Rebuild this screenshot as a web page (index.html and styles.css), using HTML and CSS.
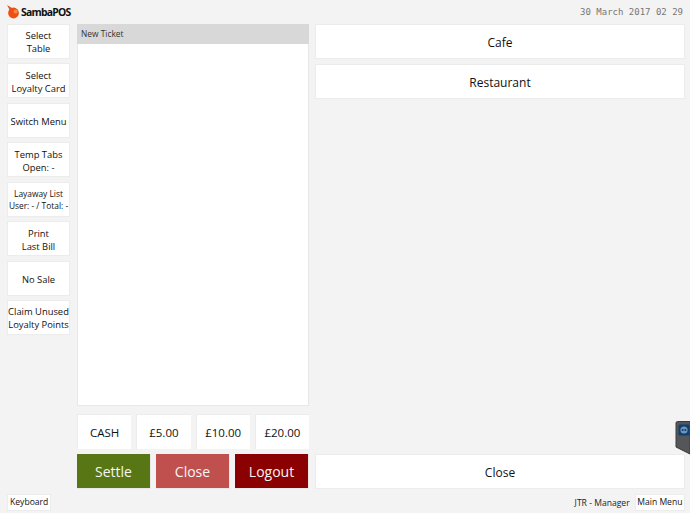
FILE: index.html
```html
<!DOCTYPE html>
<html lang="en">
<head>
<meta charset="utf-8">
<title>SambaPOS</title>
<link rel="stylesheet" href="styles.css">
</head>
<body>
<div class="app">
  <header class="topbar">
    <div class="brand">
      <svg class="logo" width="13" height="14" viewBox="0 0 13 14"><path d="M0 0 L5 3 L5.5 5 L3 5.5 Z" fill="#e8501a"/><circle cx="6.5" cy="8" r="5.4" fill="#ee4f16"/><circle cx="8.6" cy="6.4" r="2" fill="#f88a3c"/></svg>
      <span class="brand-name">SambaPOS</span>
    </div>
    <span class="clock">30 March 2017 02 29</span>
  </header>
  <main class="main">
    <nav class="side">
      <button class="btn side-btn">Select<br>Table</button>
      <button class="btn side-btn">Select<br>Loyalty Card</button>
      <button class="btn side-btn">Switch Menu</button>
      <button class="btn side-btn">Temp Tabs<br>Open: -</button>
      <button class="btn side-btn side-small">Layaway List<br>User: - / Total: -</button>
      <button class="btn side-btn">Print<br>Last Bill</button>
      <button class="btn side-btn">No Sale</button>
      <button class="btn side-btn">Claim Unused<br>Loyalty Points</button>
    </nav>
    <section class="ticket">
      <div class="ticket-list"><div class="ticket-head">New Ticket</div></div>
      <div class="cash-row">
        <button class="btn cash">CASH</button>
        <button class="btn cash">£5.00</button>
        <button class="btn cash">£10.00</button>
        <button class="btn cash">£20.00</button>
      </div>
      <div class="action-row">
        <button class="btn action settle">Settle</button>
        <button class="btn action close-red">Close</button>
        <button class="btn action logout">Logout</button>
      </div>
    </section>
    <section class="tables">
      <div class="table-list">
        <button class="btn table">Cafe</button>
        <button class="btn table">Restaurant</button>
      </div>
      <button class="btn table">Close</button>
    </section>
  </main>
  <footer class="bottombar">
    <button class="btn small">Keyboard</button>
    <div class="bottom-right">
      <span class="user">JTR - Manager</span>
      <button class="btn small menu">Main Menu</button>
    </div>
  </footer>
  <svg class="tv-tab" width="15" height="34" viewBox="0 0 15 34">
    <path d="M2.5 0.5 H15 V33 L1 26 V2 Q1 0.5 2.5 0.5 Z" fill="#54565a" stroke="#3a3a3a"/>
    <rect x="3.5" y="3.5" width="11" height="11" rx="1.5" fill="#10406f"/>
    <circle cx="9" cy="9" r="3.6" fill="#6f95bb"/>
    <path d="M6.2 9 L8 7.8 V8.6 H10 V7.8 L11.8 9 L10 10.2 V9.4 H8 V10.2 Z" fill="#10406f"/>
  </svg>
</div>
</body>
</html>
```
FILE: styles.css
```css
* { box-sizing: border-box; }
html, body { margin: 0; height: 100%; overflow: hidden; }
body { background: #f3f3f3; font-family: "Open Sans", "Noto Sans", sans-serif; color: #111; }
.app { position: relative; width: 690px; height: 513px; display: flex; flex-direction: column; padding: 0 5px 2px 7px; }
.topbar { height: 24px; display: flex; justify-content: space-between; align-items: center; flex: none; }
.brand { display: flex; align-items: center; gap: 1px; }
.logo { display: block; }
.brand-name { font-family: "Open Sans", sans-serif; font-weight: 700; font-size: 10.4px; letter-spacing: -0.75px; color: #111; }
.clock { font-family: "DejaVu Sans Mono", monospace; font-size: 9px; color: #777; margin-right: 2px; }
.main { flex: 1; display: flex; min-height: 0; }
.btn { display: block; background: #fff; border: 1px solid #ececec; padding: 0; margin: 0; font-family: inherit; color: #111; text-align: center; }
.side { width: 70px; flex: none; display: flex; flex-direction: column; gap: 4.43px; padding-right: 7px; }
.side-btn { height: 35px; padding-top: 2px; font-size: 9.4px; line-height: 13px; white-space: nowrap; overflow: hidden; }
.side-btn:first-child { padding-top: 0; }
.side-small { font-size: 8.4px; line-height: 12px; }
.ticket { width: 232px; flex: none; display: flex; flex-direction: column; }
.ticket-list { height: 383px; background: #fff; border: 1px solid #e8e8e8; border-top: 0; }
.ticket-head { height: 20px; background: #d8d8d8; font-size: 8.4px; line-height: 20px; padding-left: 4px; color: #333; margin: 0 -1px; }
.cash-row { display: flex; gap: 5px; margin-top: 8px; }
.cash { flex: 1; height: 35px; font-size: 11.5px; border-bottom: 0; border-right-width: 0; }
.action-row { display: flex; gap: 5px; margin-top: 5px; }
.action { flex: 1; height: 35px; font-size: 14px; color: #f5f5f5; border: 1px solid #e8e8e8; border-left: 0; border-top: 0; }
.settle { background: #587714; }
.close-red { background: #c0504d; }
.logout { background: #8b0000; }
.tables { flex: 1; display: flex; flex-direction: column; padding-left: 6px; }
.table-list { flex: 1; display: flex; flex-direction: column; gap: 5px; }
.table { width: 100%; height: 35px; padding-top: 1px; font-size: 12px; flex: none; }
.bottombar { height: 22px; flex: none; display: flex; justify-content: space-between; align-items: flex-end; }
.small { height: 17px; font-size: 8.6px; line-height: 15px; padding: 0 2px; }
.menu { padding: 0 1.5px; }
.bottom-right { display: flex; align-items: center; gap: 5px; }
.user { font-size: 8.6px; color: #222; }
.tv-tab { position: absolute; right: 0; top: 421px; display: block; }
```
